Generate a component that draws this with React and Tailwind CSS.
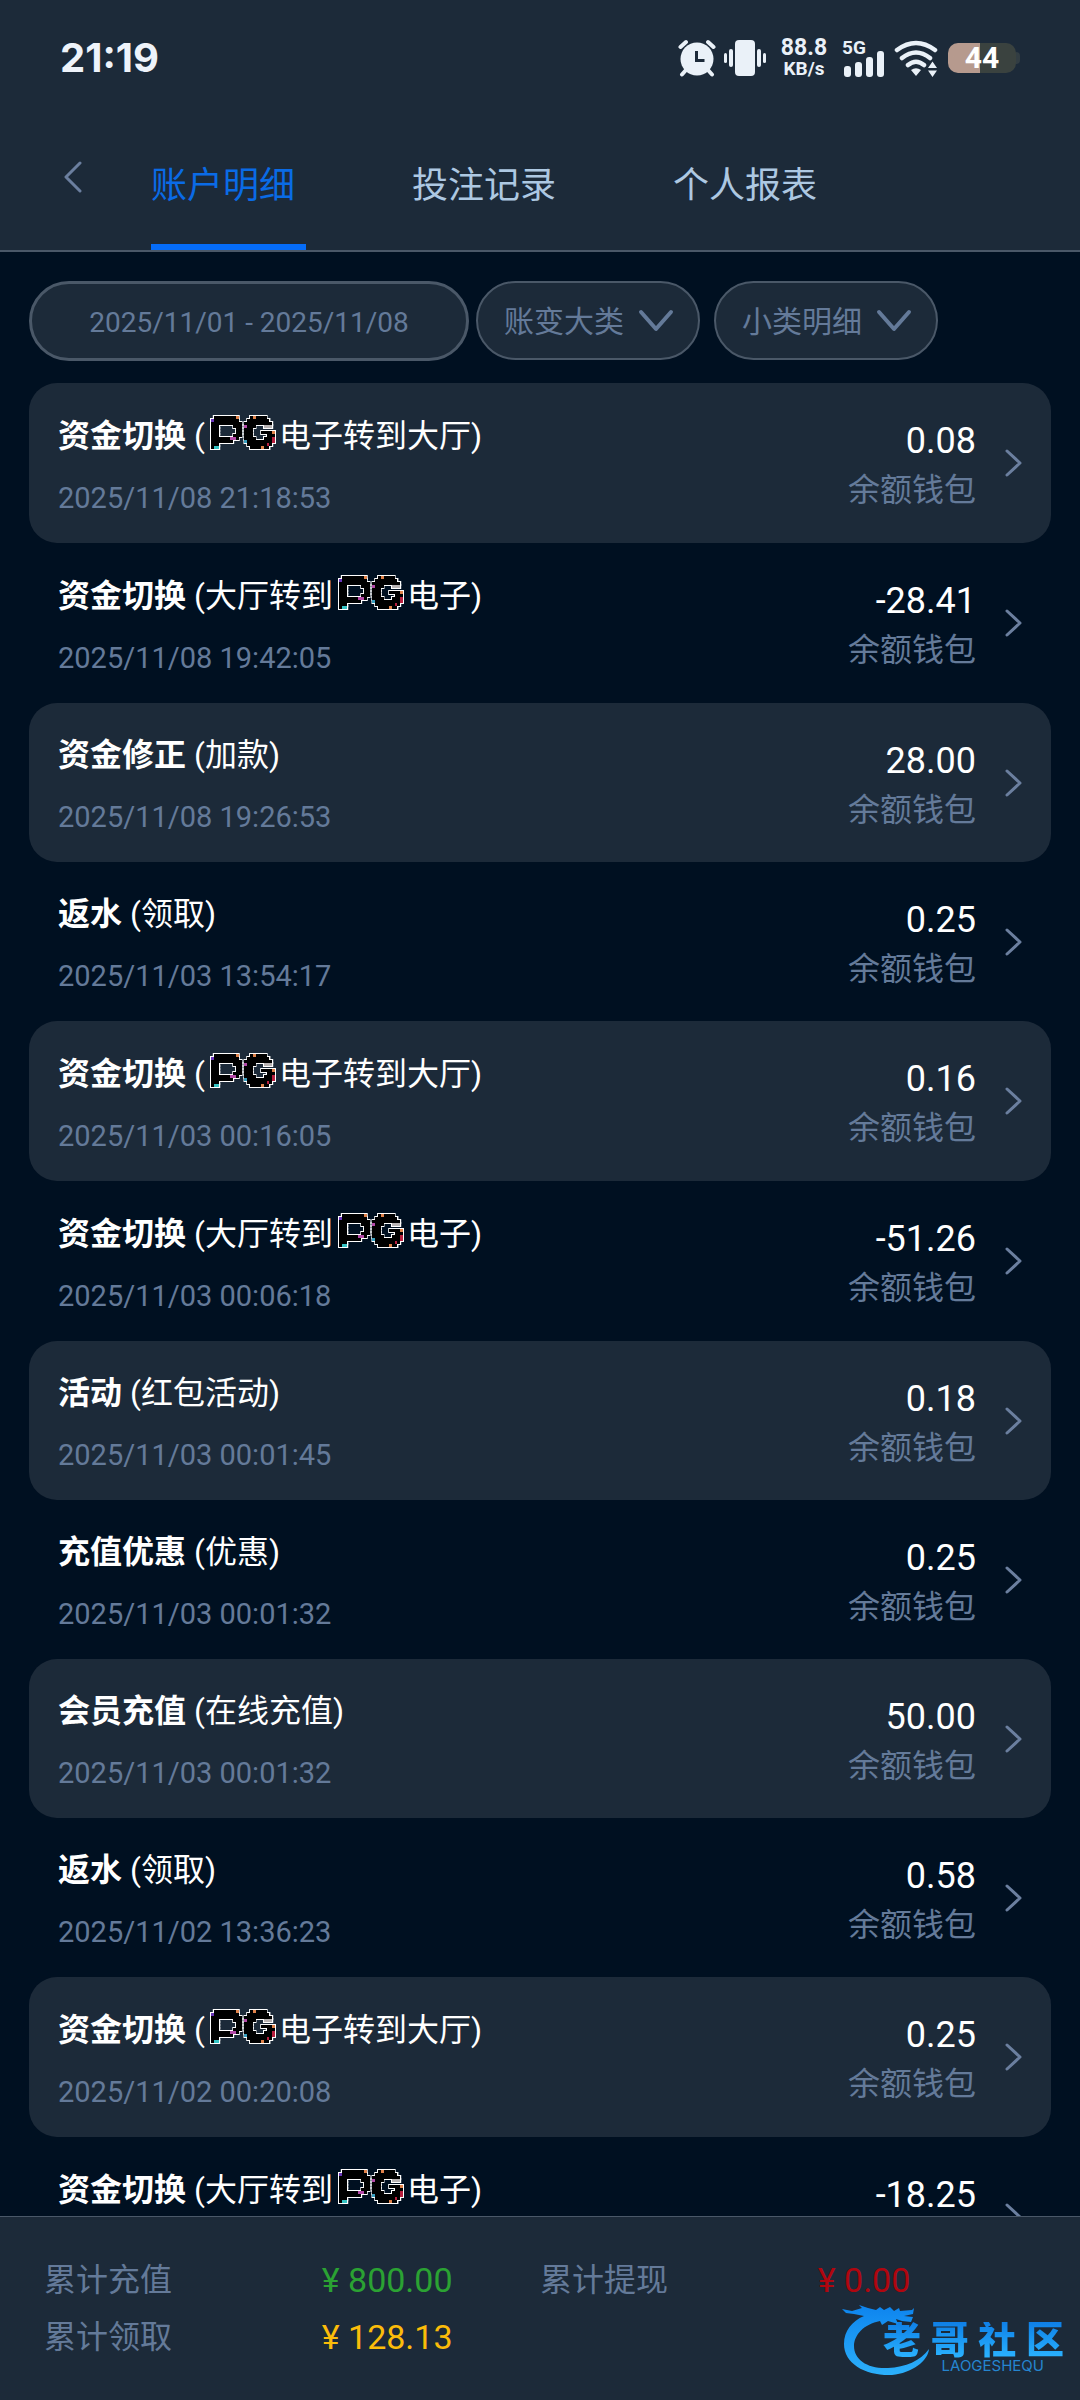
import { useState } from "react";

const PG = "PG";

const records = [
  { type: "资金切换", detail: [PG, "电子转到大厅"], time: "2025/11/08 21:18:53", amount: "0.08" },
  { type: "资金切换", detail: ["大厅转到", PG, "电子"], time: "2025/11/08 19:42:05", amount: "-28.41" },
  { type: "资金修正", detail: ["加款"], time: "2025/11/08 19:26:53", amount: "28.00" },
  { type: "返水", detail: ["领取"], time: "2025/11/03 13:54:17", amount: "0.25" },
  { type: "资金切换", detail: [PG, "电子转到大厅"], time: "2025/11/03 00:16:05", amount: "0.16" },
  { type: "资金切换", detail: ["大厅转到", PG, "电子"], time: "2025/11/03 00:06:18", amount: "-51.26" },
  { type: "活动", detail: ["红包活动"], time: "2025/11/03 00:01:45", amount: "0.18" },
  { type: "充值优惠", detail: ["优惠"], time: "2025/11/03 00:01:32", amount: "0.25" },
  { type: "会员充值", detail: ["在线充值"], time: "2025/11/03 00:01:32", amount: "50.00" },
  { type: "返水", detail: ["领取"], time: "2025/11/02 13:36:23", amount: "0.58" },
  { type: "资金切换", detail: [PG, "电子转到大厅"], time: "2025/11/02 00:20:08", amount: "0.25" },
  { type: "资金切换", detail: ["大厅转到", PG, "电子"], time: "2025/11/02 00:19:41", amount: "-18.25" },
];

// Pixel maps of the provider badge: "#" is black, letters are accent colours.
const badgeRows = [
  ".########O....#O####...",
  "V#########...########..",
  "###########.##########.",
  "###.....###.M###...GGG.",
  "###......##.###........",
  "###......##.###...####O",
  "###.....###.###.....###",
  "#######MM#..####...###R",
  "########....C#########R",
  "###..........#######R#.",
  "#TT...........####O##..",
];
const badgeColors = {
  "#": "#000000",
  V: "#6a35b8",
  O: "#e0824a",
  M: "#b44aa8",
  R: "#b8203f",
  G: "#b9b4b4",
  C: "#3aa0c0",
  T: "#35c4c4",
};
const badgeCells = badgeRows.flatMap((row, y) =>
  [...row].map((c, x) => ({ c, x: x * 3, y: y * 3 })).filter((p) => p.c !== ".")
);

function PgBadge() {
  return (
    <svg className="ml-[5px] mr-[3px] inline-block h-[35px] w-[66px] align-[-3px]" viewBox="-1 -1 71 35" preserveAspectRatio="none" role="img" aria-label="PG">
      <g fill="#ffffff">
        {badgeCells.map((p) => (
          <rect key={`${p.x}-${p.y}`} x={p.x - 1} y={p.y - 1} width="5" height="5" />
        ))}
      </g>
      {badgeCells.map((p) => (
        <rect key={`${p.x}-${p.y}`} x={p.x} y={p.y} width="3" height="3" fill={badgeColors[p.c]} shapeRendering="crispEdges" />
      ))}
    </svg>
  );
}

function Chevron({ className, d, box }) {
  return (
    <svg className={className} viewBox={box} fill="none" stroke="currentColor" strokeLinecap="round" strokeLinejoin="round" aria-hidden="true">
      <path d={d} />
    </svg>
  );
}

function StatusBar() {
  return (
    <div className="flex h-[116px] items-center justify-between pl-[60px] pr-[60px]">
      <span className="font-['Inter',sans-serif] text-[40px] font-bold leading-none text-[#eef3fa]">21:19</span>
      <div className="flex items-center text-[#eaf1f8]">
        <svg className="h-[38px] w-[38px]" viewBox="0 0 38 38" aria-hidden="true">
          <g stroke="currentColor" strokeWidth="4" strokeLinecap="round">
            <path d="M2.5 8 8 3M35.5 8 30 3M8 31 4 35.500M30 31 34 35.500" />
          </g>
          <circle cx="19" cy="20" r="16.500" fill="currentColor" />
          <path d="M18.500 12v9.500h8" fill="none" stroke="#1c2a39" strokeWidth="3" />
        </svg>
        <svg className="ml-2 h-[38px] w-[42px]" viewBox="0 0 42 38" fill="currentColor" aria-hidden="true">
          <rect x="11" y="1" width="20" height="36" rx="4" />
          <rect x="5" y="10" width="4" height="18" rx="2" />
          <rect x="33" y="10" width="4" height="18" rx="2" />
          <rect x="0" y="14" width="3" height="10" rx="1.5" />
          <rect x="39" y="14" width="3" height="10" rx="1.5" />
        </svg>
        <div className="ml-3 flex w-[52px] flex-col items-center font-bold">
          <span className="text-[23px] leading-[22px]">88.8</span>
          <span className="text-[19px] leading-[20px]">KB/s</span>
        </div>
        <div className="relative ml-3 h-[38px] w-[42px]">
          <span className="absolute left-0 top-0 text-[19px] font-bold leading-[18px]">5G</span>
          <svg className="h-full w-full" viewBox="0 0 42 38" fill="currentColor" aria-hidden="true">
            <rect x="2" y="27" width="7" height="11" rx="3" />
            <rect x="13" y="23" width="7" height="15" rx="3" />
            <rect x="24" y="18" width="7" height="20" rx="3" />
            <rect x="35" y="12" width="7" height="26" rx="3" />
          </svg>
        </div>
        <svg className="ml-2.5 h-[38px] w-[44px]" viewBox="0 0 44 38" fill="none" stroke="currentColor" strokeWidth="4.500" strokeLinecap="round" aria-hidden="true">
          <path d="M3 11Q22-3 41 11M8 19Q22 8 36 19M14 26Q22 19.500 30 26" />
          <path d="M17 31Q22 27.500 27 31L22 37ZM34 29h9l-4.500-6.500ZM34 31.500h9l-4.500 6.500Z" fill="currentColor" stroke="none" />
        </svg>
        <div className="ml-2.5 flex items-center">
          <div className="flex h-[30px] w-[68px] items-center justify-center rounded-[10px] bg-linear-to-r from-[#b69a8e] from-47% to-[#3a423f] to-47%">
            <span className="text-[30px] font-bold leading-none text-white">44</span>
          </div>
          <span className="h-3 w-1 rounded-r bg-[#323d43]" />
        </div>
      </div>
    </div>
  );
}

function TabBar() {
  const tabs = ["账户明细", "投注记录", "个人报表"];
  const [active, setActive] = useState(0);
  return (
    <nav className="flex h-[134px] pl-[58px]">
      <button type="button" aria-label="返回" className="mt-[45px] h-8 w-[93px] text-[#6b7f9f]">
        <Chevron className="ml-1 h-8 w-5 stroke-3" box="0 0 20 32" d="M18 2 4 16l14 14" />
      </button>
      <div className="flex gap-[106px]">
        {tabs.map((t, i) => (
          <button
            key={t}
            type="button"
            onClick={() => setActive(i)}
            className={
              i === active
                ? "w-[155px] border-b-6 border-[#056cf8] pt-3 text-left text-[36px] text-[#0a6be6]"
                : "w-[155px] border-b-6 border-transparent pt-3 text-left text-[36px] text-[#adc8e2]"
            }
          >
            {t}
          </button>
        ))}
      </div>
    </nav>
  );
}

function FilterSelect({ label }) {
  return (
    <div className="relative text-[#647a99]">
      <select
        aria-label={label}
        className="h-[79px] w-56 appearance-none rounded-full border-2 border-[#4a5868] bg-[#1c2a39] pl-[26px] pt-0.5 text-[30px] outline-none"
      >
        <option>{label}</option>
      </select>
      <Chevron
        className="pointer-events-none absolute right-[26px] top-[28px] h-6 w-9 stroke-4"
        box="0 0 36 24"
        d="M3 3 18 20 33 3"
      />
    </div>
  );
}

function RecordRow({ record, shaded }) {
  const hasBadge = record.detail.includes(PG);
  return (
    <li>
      <button
        type="button"
        className={
          shaded
            ? "flex w-full items-center rounded-[28px] bg-[#1c2a39] px-[29px] py-[25px] text-left"
            : "flex w-full items-center px-[29px] py-[25px] text-left"
        }
      >
        <span className="flex flex-1 flex-col gap-[18px] pt-[3px]">
          <span className={hasBadge ? "h-[49px] text-[32px] leading-[50px] text-white" : "h-12 text-[32px] leading-[48px] text-white"}>
            <b className="font-bold">{record.type}</b>
            {" ("}
            {record.detail.map((part, i) => (part === PG ? <PgBadge key={i} /> : <span key={i}>{part}</span>))}
            {")"}
          </span>
          <span className="text-[29px] leading-[40px] text-[#647a99]">{record.time}</span>
        </span>
        <span className="flex flex-col items-end gap-1">
          <span className="text-[36px] leading-[50px] text-white">{record.amount}</span>
          <span className="text-[32px] leading-[40px] text-[#647a99]">余额钱包</span>
        </span>
        <Chevron className="ml-7 h-7 w-[18px] stroke-3 text-[#6b7f9f]" box="0 0 18 28" d="M3 2 16 14 3 26" />
      </button>
    </li>
  );
}

function Total({ label, value, className }) {
  return (
    <div className="flex items-center leading-[57px]">
      <dt className="w-[56%] text-[32px] text-[#647a99]">{label}</dt>
      <dd className={className}>{value}</dd>
    </div>
  );
}

function Watermark() {
  return (
    <div className="pointer-events-none absolute bottom-6 right-[16px] flex h-[72px] w-[222px] flex-col items-end">
      <svg className="absolute left-0 top-0 h-[72px] w-[92px]" viewBox="0 0 92 72" aria-hidden="true">
        <defs>
          <linearGradient id="dragon" x1="0" y1="0" x2="0" y2="1">
            <stop offset="0" stopColor="#0d84ee" />
            <stop offset="1" stopColor="#2cb0fb" />
          </linearGradient>
        </defs>
        <path
          fill="url(#dragon)"
          d="M0 5 10 7 20 4 17 1 26 4 34 6 38 3 42 6 48 3 52 7 57 4 58 7 70 6 72 4 71 10 62 12 71 13 69 18 60 17 54 15 56 20 46 17 40 21 38 17C22 20 12 31 12 42 12 56 26 65 46 64 64 63 78 57 87 45 86 57 70 69 50 71 24 72 2 60 2 40 2 27 10 17 22 12L12 10 4 9Z"
        />
      </svg>
      <div className="mt-[18px] flex w-[181px] justify-between bg-linear-to-b from-[#0f7fe6] to-[#2bb3ff] bg-clip-text text-[38px] font-black leading-[36px] text-transparent">
        {[..."老哥社区"].map((c) => (
          <span key={c}>{c}</span>
        ))}
      </div>
      <div className="mr-5 font-['Inter',sans-serif] text-[15px] leading-[16px] text-[#2585cf]">LAOGESHEQU</div>
    </div>
  );
}

export default function App() {
  return (
    <div className="flex h-screen flex-col overflow-hidden bg-[#001021] font-['Roboto','Noto_Sans_CJK_SC',sans-serif]">
      <header className="shrink-0 border-b-2 border-[#4a5868] bg-[#1c2a39]">
        <StatusBar />
        <TabBar />
      </header>

      <main className="min-h-0 flex-1 overflow-hidden px-[29px] pt-[29px]">
        <div className="flex items-start">
          <button
            type="button"
            className="mr-[7px] h-20 w-[440px] rounded-full border-3 border-[#4a5868] bg-[#1c2a39] pt-[3px] text-[28px] text-[#647a99]"
          >
            2025/11/01 - 2025/11/08
          </button>
          <div className="flex gap-3.5">
            <FilterSelect label="账变大类" />
            <FilterSelect label="小类明细" />
          </div>
        </div>
        <ul className="mt-[22px]">
          {records.map((r, i) => (
            <RecordRow key={i} record={r} shaded={i % 2 === 0} />
          ))}
        </ul>
      </main>

      <footer className="relative shrink-0 border-t border-[#4a5868] bg-[#1c2a39] px-11 pb-[34px] pt-[35px]">
        <dl className="grid grid-cols-2">
          <Total label="累计充值" value="¥ 800.00" className="text-[34px] text-[#2ba233]" />
          <Total label="累计提现" value="¥ 0.00" className="text-[34px] text-[#b0060f]" />
          <Total label="累计领取" value="¥ 128.13" className="text-[34px] text-[#fbbc0a]" />
        </dl>
        <Watermark />
      </footer>
    </div>
  );
}
